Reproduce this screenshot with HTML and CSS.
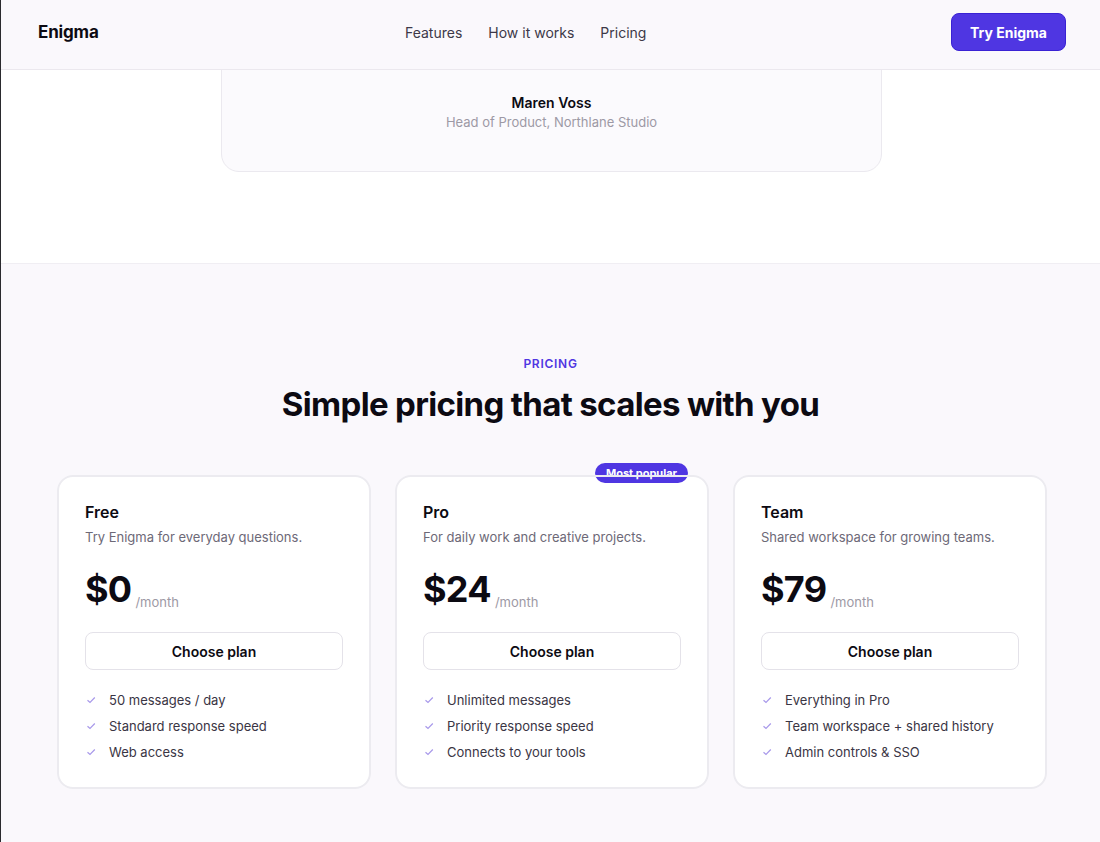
FILE: index.html
```html
<!DOCTYPE html>
<html>

<head>
  <meta charset="utf-8">
  <title>Enigma</title>
  <link rel="stylesheet" href="styles.css">
</head>

<body>

  <header class="topbar">
    <a class="logo" href="#">Enigma</a>
    <nav class="nav">
      <a href="#features">Features</a>
      <a href="#how">How it works</a>
      <a href="#pricing">Pricing</a>
    </nav>
    <a class="cta" href="#">Try Enigma</a>
  </header>

  <section class="quote">
    <div class="quote-card">
      <div class="quote-name">Maren Voss</div>
      <div class="quote-role">Head of Product, Northlane Studio</div>
    </div>
  </section>

  <section class="pricing" id="pricing">
    <p class="eyebrow">PRICING</p>
    <h2>Simple pricing that scales with you</h2>

    <div class="plans">
      <div class="plan">
        <h3>Free</h3>
        <p class="plan-desc">Try Enigma for everyday questions.</p>
        <div class="price"><b>$0</b><span>/month</span></div>
        <button class="choose">Choose plan</button>
        <ul class="perks">
          <li><svg viewBox="0 0 10 10"><path d="M1.5 5.2 L4 7.5 L8.8 2.5"/></svg>50 messages / day</li>
          <li><svg viewBox="0 0 10 10"><path d="M1.5 5.2 L4 7.5 L8.8 2.5"/></svg>Standard response speed</li>
          <li><svg viewBox="0 0 10 10"><path d="M1.5 5.2 L4 7.5 L8.8 2.5"/></svg>Web access</li>
        </ul>
      </div>

      <div class="plan popular">
        <span class="badge">Most popular</span>
        <h3>Pro</h3>
        <p class="plan-desc">For daily work and creative projects.</p>
        <div class="price"><b>$24</b><span>/month</span></div>
        <button class="choose">Choose plan</button>
        <ul class="perks">
          <li><svg viewBox="0 0 10 10"><path d="M1.5 5.2 L4 7.5 L8.8 2.5"/></svg>Unlimited messages</li>
          <li><svg viewBox="0 0 10 10"><path d="M1.5 5.2 L4 7.5 L8.8 2.5"/></svg>Priority response speed</li>
          <li><svg viewBox="0 0 10 10"><path d="M1.5 5.2 L4 7.5 L8.8 2.5"/></svg>Connects to your tools</li>
        </ul>
      </div>

      <div class="plan">
        <h3>Team</h3>
        <p class="plan-desc">Shared workspace for growing teams.</p>
        <div class="price"><b>$79</b><span>/month</span></div>
        <button class="choose">Choose plan</button>
        <ul class="perks">
          <li><svg viewBox="0 0 10 10"><path d="M1.5 5.2 L4 7.5 L8.8 2.5"/></svg>Everything in Pro</li>
          <li><svg viewBox="0 0 10 10"><path d="M1.5 5.2 L4 7.5 L8.8 2.5"/></svg>Team workspace + shared history</li>
          <li><svg viewBox="0 0 10 10"><path d="M1.5 5.2 L4 7.5 L8.8 2.5"/></svg>Admin controls &amp; SSO</li>
        </ul>
      </div>
    </div>
  </section>

</body>

</html>
```

FILE: styles.css
```css
body {
  margin: 0;
  background-color: #fff;
  color: #0c0a12;
  font-family: Inter, "Noto Sans", sans-serif;
  border-left: 1px solid #2a2a2e;
  min-height: 100vh;
}

a {
  color: inherit;
  text-decoration: none;
}

/* top bar stays over the page */
.topbar {
  position: fixed;
  top: 0;
  left: 1px;
  right: 0;
  z-index: 10;
  height: 70px;
  box-sizing: border-box;
  display: flex;
  align-items: center;
  padding: 0 34px 5px 37px;
  background-color: #faf8fc;
  border-bottom: 1px solid #ebe8ee;
}

.logo {
  width: 367px;
  font-size: 17px;
  font-weight: 700;
  letter-spacing: -0.01em;
}

.nav {
  display: flex;
  gap: 26px;
  font-size: 14px;
  color: #3d3848;
}

.cta {
  margin-left: auto;
  width: 115px;
  height: 38px;
  box-sizing: border-box;
  display: flex;
  align-items: center;
  justify-content: center;
  background-color: #4f36e2;
  border: 1px solid #3a22d4;
  border-radius: 8px;
  color: #fff;
  font-size: 14px;
  font-weight: 700;
}

/* testimonial */
.quote {
  padding-bottom: 91px;
}

.quote-card {
  width: 661px;
  box-sizing: border-box;
  margin: 0 auto;
  padding: 92px 0 40px;
  text-align: center;
  background-color: #fbfafd;
  border: 1px solid #ebe9ef;
  border-radius: 0 0 18px 18px;
  position: relative;
  left: 1px;
}

.quote-name {
  font-size: 14px;
  font-weight: 600;
  line-height: 20px;
}

.quote-role {
  font-size: 13px;
  line-height: 18px;
  color: #9d99a5;
}

/* pricing */
.pricing {
  background-color: #faf8fc;
  border-top: 1px solid #f0eef3;
  padding: 92px 0 60px;
  text-align: center;
}

.eyebrow {
  margin: 0;
  font-size: 12px;
  line-height: 16px;
  font-weight: 600;
  letter-spacing: 0.06em;
  color: #4f36e2;
}

h2 {
  margin: 12px 0 0;
  font-size: 33px;
  line-height: 40px;
  font-weight: 700;
  letter-spacing: -0.02em;
}

.plans {
  display: grid;
  grid-template-columns: repeat(3, 314px);
  gap: 24px;
  margin: 51px 0 0 56px;
  text-align: left;
}

.plan {
  position: relative;
  background-color: #fff;
  border-radius: 16px;
  padding: 26px 28px 24px;
}

/* border drawn on top so it also runs over the badge */
.plan::after {
  content: "";
  position: absolute;
  inset: 0;
  border: 2px solid #ecebf0;
  border-radius: 16px;
  pointer-events: none;
}

.badge {
  position: absolute;
  top: -12px;
  right: 21px;
  width: 93px;
  height: 20px;
  line-height: 20px;
  text-align: center;
  border-radius: 10px;
  background-color: #4f36e2;
  color: #fff;
  font-size: 11px;
  font-weight: 700;
}

h3 {
  margin: 0;
  font-size: 16px;
  line-height: 22px;
  font-weight: 600;
}

.plan-desc {
  margin: 4px 0 0;
  font-size: 13px;
  line-height: 20px;
  color: #6d6977;
}

.price {
  margin-top: 20px;
  display: flex;
  gap: 4px;
  height: 44px;
}

.price b {
  font-size: 36px;
  line-height: 44px;
  font-weight: 700;
  letter-spacing: -0.02em;
}

.price span {
  align-self: flex-end;
  margin-bottom: 1px;
  font-size: 13px;
  line-height: 16px;
  color: #9d99a5;
}

.choose {
  display: block;
  width: 100%;
  height: 38px;
  margin-top: 21px;
  background-color: #fff;
  border: 1px solid #e4e2e9;
  border-radius: 8px;
  font-family: inherit;
  font-size: 14px;
  font-weight: 600;
  color: #0c0a12;
}

.perks {
  list-style: none;
  margin: 17px 0 0;
  padding: 0;
  font-size: 13px;
  line-height: 26px;
  color: #3a3544;
}

.perks li {
  display: flex;
  align-items: center;
  gap: 13px;
}

.perks svg {
  width: 10px;
  height: 10px;
  margin-left: 1px;
  fill: none;
  stroke: #a899ea;
  stroke-width: 1.2;
}
```
